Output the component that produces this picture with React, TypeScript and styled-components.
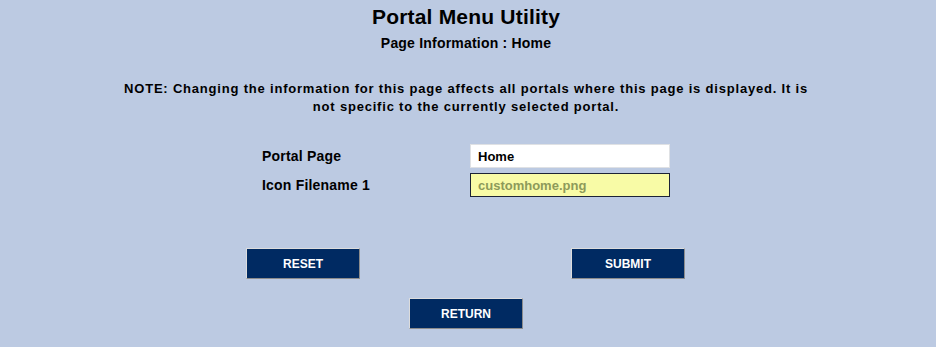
import styled, { createGlobalStyle } from "styled-components"

const GlobalStyle = createGlobalStyle`
  html, body {
    margin: 0;
    padding: 0;
    background: #bccae2;
  }
  body {
    font-family: "Liberation Sans", Arial, sans-serif;
    color: #000;
  }
`

const Page = styled.div`
  display: flex;
  flex-direction: column;
  align-items: center;
  padding: 5px 4px 0 0;
  min-height: 347px;
  box-sizing: border-box;
`

const Title = styled.h1`
  margin: 0;
  font-size: 21px;
  font-weight: 700;
  letter-spacing: 0.2px;
  line-height: 24px;
`

const Subtitle = styled.h2`
  margin: 6px 0 0 0;
  font-size: 14px;
  font-weight: 700;
  letter-spacing: 0.2px;
  line-height: 16px;
`

const Note = styled.p`
  margin: 29px 0 0 0;
  width: 694px;
  text-align: center;
  font-size: 13px;
  font-weight: 700;
  letter-spacing: 0.8px;
  line-height: 18px;
`

const FormGrid = styled.div`
  display: grid;
  grid-template-columns: 208px 200px;
  row-gap: 5px;
  margin-top: 28px;
  align-items: center;
`

const Label = styled.label`
  font-size: 14px;
  font-weight: 700;
  letter-spacing: 0.2px;
`

const Field = styled.input<{ $readOnly?: boolean }>`
  box-sizing: border-box;
  width: 200px;
  height: 24px;
  padding: 0 7px;
  font-family: "Liberation Sans", Arial, sans-serif;
  font-size: 13px;
  font-weight: 700;
  outline: none;
  border: 1px solid ${({ $readOnly }) => ($readOnly ? "#1c2236" : "#dfe1e4")};
  background: ${({ $readOnly }) => ($readOnly ? "#f8fba6" : "#ffffff")};
  color: ${({ $readOnly }) => ($readOnly ? "#8d9a5a" : "#000000")};
`

const ButtonRow = styled.div`
  display: grid;
  grid-template-columns: 325px 325px;
  justify-items: center;
  margin-top: 51px;
  margin-right: 1px;
`

const ActionButton = styled.button`
  width: 114px;
  height: 31px;
  box-sizing: border-box;
  background: #002a62;
  color: #ffffff;
  font-family: "Liberation Sans", Arial, sans-serif;
  font-size: 12px;
  font-weight: 700;
  border: 1px solid;
  border-color: #dcdcdc #8c8c8c #8c8c8c #dcdcdc;
  cursor: pointer;
`

const ReturnWrap = styled.div`
  margin-top: 19px;
`

export default function App() {
  return (
    <>
      <GlobalStyle />
      <Page>
        <Title>Portal Menu Utility</Title>
        <Subtitle>Page Information : Home</Subtitle>
        <Note>
          NOTE: Changing the information for this page affects all portals where this
          page is displayed. It is not specific to the currently selected portal.
        </Note>

        <FormGrid>
          <Label>Portal Page</Label>
          <Field defaultValue="Home" />
          <Label>Icon Filename 1</Label>
          <Field $readOnly readOnly defaultValue="customhome.png" />
        </FormGrid>

        <ButtonRow>
          <ActionButton>RESET</ActionButton>
          <ActionButton>SUBMIT</ActionButton>
        </ButtonRow>
        <ReturnWrap>
          <ActionButton>RETURN</ActionButton>
        </ReturnWrap>
      </Page>
    </>
  )
}
